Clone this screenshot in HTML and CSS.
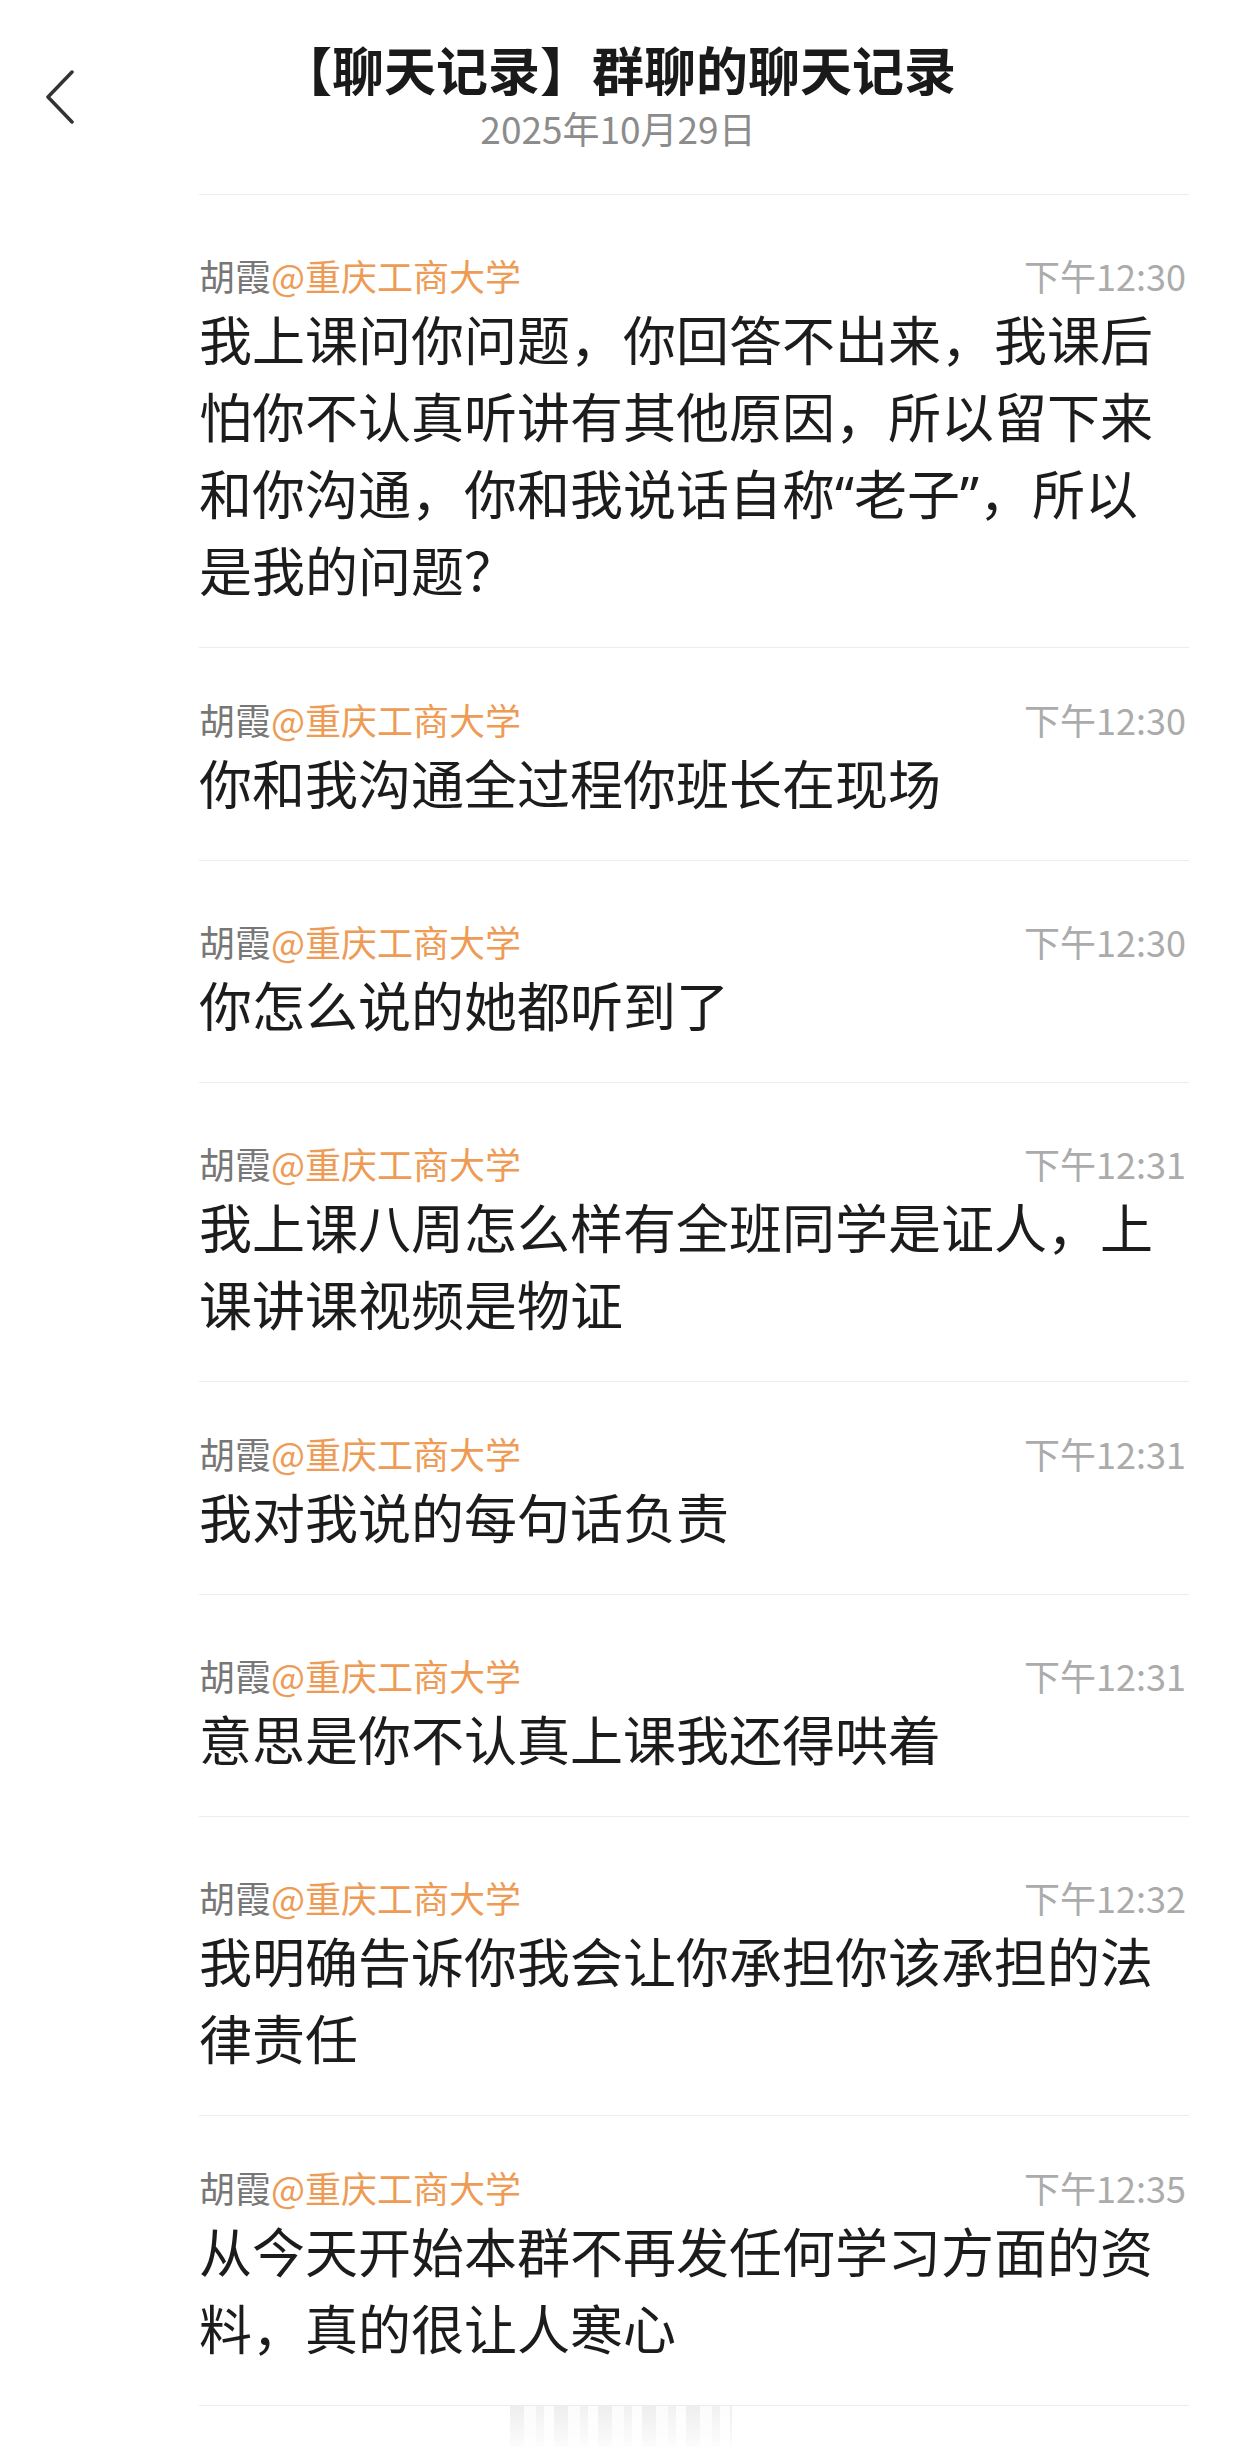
FILE: index.html
```html
<!DOCTYPE html>
<html>
<head>
    <meta charset="utf-8">
    <title>聊天记录</title>
    <link rel="stylesheet" href="styles.css">
</head>
<body>
    <div class="header">
        <div class="header-back">
            <svg width="30" height="54" viewBox="0 0 30 54">
                <polyline points="27,2 3,27 27,52" fill="none" stroke="#333" stroke-width="3.5" stroke-linecap="round" stroke-linejoin="round"/>
            </svg>
        </div>
        <div class="header-main">
            <div class="header-title">【聊天记录】群聊的聊天记录</div>
            <div class="header-date">2025年10月29日</div>
        </div>
        <div class="header-side"></div>
    </div>

    <ul class="chat-list">
        <li class="chat-item">
            <div class="chat-meta"><span class="chat-name">胡霞<em>@重庆工商大学</em></span><span class="chat-time">下午12:30</span></div>
            <p class="chat-text">我上课问你问题，你回答不出来，我课后怕你不认真听讲有其他原因，所以留下来和你沟通，你和我说话自称“老子”，所以是我的问题？</p>
        </li>
        <li class="chat-item tight">
            <div class="chat-meta"><span class="chat-name">胡霞<em>@重庆工商大学</em></span><span class="chat-time">下午12:30</span></div>
            <p class="chat-text">你和我沟通全过程你班长在现场</p>
        </li>
        <li class="chat-item">
            <div class="chat-meta"><span class="chat-name">胡霞<em>@重庆工商大学</em></span><span class="chat-time">下午12:30</span></div>
            <p class="chat-text">你怎么说的她都听到了</p>
        </li>
        <li class="chat-item">
            <div class="chat-meta"><span class="chat-name">胡霞<em>@重庆工商大学</em></span><span class="chat-time">下午12:31</span></div>
            <p class="chat-text">我上课八周怎么样有全班同学是证人，上课讲课视频是物证</p>
        </li>
        <li class="chat-item tight">
            <div class="chat-meta"><span class="chat-name">胡霞<em>@重庆工商大学</em></span><span class="chat-time">下午12:31</span></div>
            <p class="chat-text">我对我说的每句话负责</p>
        </li>
        <li class="chat-item">
            <div class="chat-meta"><span class="chat-name">胡霞<em>@重庆工商大学</em></span><span class="chat-time">下午12:31</span></div>
            <p class="chat-text">意思是你不认真上课我还得哄着</p>
        </li>
        <li class="chat-item">
            <div class="chat-meta"><span class="chat-name">胡霞<em>@重庆工商大学</em></span><span class="chat-time">下午12:32</span></div>
            <p class="chat-text">我明确告诉你我会让你承担你该承担的法律责任</p>
        </li>
        <li class="chat-item tight">
            <div class="chat-meta"><span class="chat-name">胡霞<em>@重庆工商大学</em></span><span class="chat-time">下午12:35</span></div>
            <p class="chat-text">从今天开始本群不再发任何学习方面的资料，真的很让人寒心</p>
        </li>
    </ul>

    <div class="page-fade"></div>
</body>
</html>
```

FILE: styles.css
```css
* {
    margin: 0;
    padding: 0;
    list-style: none;
}

body {
    background: #ffffff;
    font-family: "Noto Sans CJK SC", "Noto Sans", sans-serif;
    color: #1c1c1c;
}

/* 顶部标题栏 */
.header {
    display: grid;
    grid-template-columns: 120px 1fr 120px;
    align-items: center;
    padding-top: 39px;
    padding-bottom: 44px;
}

.header-back {
    padding-left: 45px;
    padding-top: 5px;
}

.header-back svg {
    display: block;
}

.header-main {
    text-align: center;
}

.header-title {
    font-size: 52px;
    line-height: 60px;
    font-weight: 700;
    color: #1a1a1a;
}

.header-date {
    margin-top: 7px;
    font-size: 37px;
    line-height: 44px;
    color: #8c8c8c;
}

/* 聊天记录列表 */
.chat-list {
    margin: 0 47px 0 199px;
    border-top: 1px solid #ececec;
}

.chat-item {
    padding: 55px 0 37px;
    border-bottom: 1px solid #ececec;
}

.chat-item.tight {
    padding-top: 46px;
}

.chat-meta {
    display: flex;
    justify-content: space-between;
    align-items: baseline;
    font-size: 36px;
    line-height: 50px;
}

.chat-name {
    color: #777777;
}

.chat-name em {
    font-style: normal;
    color: #ee9b55;
}

.chat-time {
    color: #ababab;
    margin-right: 3px;
}

/* 西文字体在前，引号用窄字形 */
.chat-text {
    margin-top: 2px;
    padding-right: 30px;
    font-family: "Noto Sans", "Noto Sans CJK SC", sans-serif;
    font-size: 53px;
    line-height: 77px;
    color: #1c1c1c;
}

.page-fade {
    width: 222px;
    height: 41px;
    margin-left: 510px;
    background:
        linear-gradient(to bottom, rgba(255, 255, 255, 0.1), rgba(255, 255, 255, 0.85)),
        repeating-linear-gradient(90deg, #ececec 0 14px, #fbfbfb 14px 26px, #f0f0f0 26px 34px, #fdfdfd 34px 44px);
}
```
